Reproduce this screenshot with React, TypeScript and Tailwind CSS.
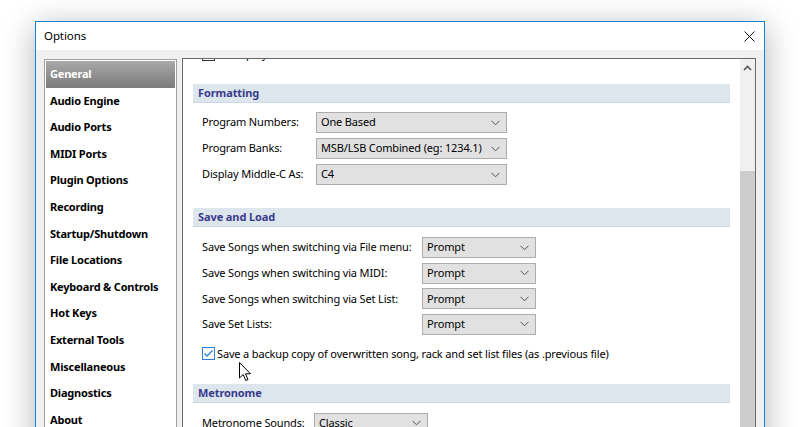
import React from "react";

const font = { fontFamily: '"Noto Sans", "Open Sans", sans-serif' };

function Chevron() {
  return (
    <svg width="9" height="6" viewBox="0 0 9 6" className="shrink-0">
      <path d="M0.5 0.8 L4.5 4.8 L8.5 0.8" fill="none" stroke="#505050" strokeWidth="1" />
    </svg>
  );
}

function Select({ value, w }: { value: string; w: string }) {
  return (
    <div
      className={`${w} h-[21px] bg-[#e1e1e1] border border-[#adadad] flex items-center justify-between pl-[4px] pr-[6px] text-[11px] tracking-[-0.15px] text-black shrink-0`}
    >
      <span className="whitespace-nowrap">{value}</span>
      <Chevron />
    </div>
  );
}

function Header({ title }: { title: string }) {
  return (
    <div className="h-[19px] bg-[#dde6ed] border-b border-[#cfd8df] flex items-center pl-[5px] text-[11px] tracking-[-0.1px] font-bold text-[#3a3a8c]">
      {title}
    </div>
  );
}

function Row({ label, lw, value, sw }: { label: string; lw: string; value: string; sw: string }) {
  return (
    <div className="flex items-center h-[21px] pl-[9px]">
      <div className={`${lw} text-[11px] tracking-[-0.15px] text-black whitespace-nowrap shrink-0`}>{label}</div>
      <Select value={value} w={sw} />
    </div>
  );
}

const items = [
  "General",
  "Audio Engine",
  "Audio Ports",
  "MIDI Ports",
  "Plugin Options",
  "Recording",
  "Startup/Shutdown",
  "File Locations",
  "Keyboard & Controls",
  "Hot Keys",
  "External Tools",
  "Miscellaneous",
  "Diagnostics",
  "About",
];

export default function App() {
  return (
    <div className="w-[800px] h-[427px] overflow-hidden bg-white relative" style={font}>
      <div className="ml-[35px] mt-[21px] w-[730px] h-[440px] border border-[#1883d7] bg-[#f0f0f0] shadow-[0_6px_30px_rgba(0,0,0,0.3)] flex flex-col">
        {/* title bar */}
        <div className="h-[28px] bg-white flex items-center justify-between pl-[8px] pr-[9px] shrink-0">
          <span className="text-[11.5px] tracking-[-0.1px] text-black">Options</span>
          <svg width="11" height="11" viewBox="0 0 11 11">
            <path d="M0.5 0.5 L10.5 10.5 M10.5 0.5 L0.5 10.5" stroke="#111" strokeWidth="1" />
          </svg>
        </div>
        {/* body */}
        <div className="flex items-start pl-[8px] pr-[8px] pt-[8px] gap-[5px] flex-1 min-h-0">
          {/* list */}
          <div className="w-[133px] h-[400px] mt-[1px] border border-[#a0a0a0] bg-white p-[1px] flex flex-col shrink-0">
            {items.map((it, i) => (
              <div
                key={it}
                className={`h-[26.6px] shrink-0 flex items-center pl-[4px] text-[11px] tracking-[-0.2px] font-bold whitespace-nowrap ${
                  i === 0 ? "bg-gradient-to-b from-[#a9a9a9] to-[#7b7b7b] text-white" : "text-black"
                }`}
              >
                {it}
              </div>
            ))}
          </div>
          {/* right panel */}
          <div className="w-[574px] h-[400px] border border-[#6a6a6a] bg-white flex shrink-0">
            <div className="flex-1 overflow-hidden flex flex-col pl-[10px] pr-[10px]">
              {/* clipped row */}
              <div className="mt-[-11px] h-[13px] flex items-center pl-[9px] gap-[3px] shrink-0">
                <div className="w-[13px] h-[13px] border border-[#333] bg-white" />
                <span className="text-[11px] text-black">Auto-play</span>
              </div>
              <div className="mt-[23px]">
                <Header title="Formatting" />
              </div>
              <div className="mt-[9px] flex flex-col gap-[5px]">
                <Row label="Program Numbers:" lw="w-[114px]" value="One Based" sw="w-[191px]" />
                <Row label="Program Banks:" lw="w-[114px]" value="MSB/LSB Combined (eg: 1234.1)" sw="w-[191px]" />
                <Row label="Display Middle-C As:" lw="w-[114px]" value="C4" sw="w-[191px]" />
              </div>
              <div className="mt-[23px]">
                <Header title="Save and Load" />
              </div>
              <div className="mt-[10px] flex flex-col gap-[4.67px]">
                <Row label="Save Songs when switching via File menu:" lw="w-[220px]" value="Prompt" sw="w-[114px]" />
                <Row label="Save Songs when switching via MIDI:" lw="w-[220px]" value="Prompt" sw="w-[114px]" />
                <Row label="Save Songs when switching via Set List:" lw="w-[220px]" value="Prompt" sw="w-[114px]" />
                <Row label="Save Set Lists:" lw="w-[220px]" value="Prompt" sw="w-[114px]" />
              </div>
              <div className="mt-[11px] h-[16px] flex items-center pl-[9px] gap-[2px]">
                <div className="w-[13px] h-[13px] border border-[#2a7fd4] bg-white flex items-center justify-center shrink-0">
                  <svg width="11" height="11" viewBox="0 0 11 11">
                    <path d="M1.5 5.5 L4 8 L9.5 2.5" fill="none" stroke="#2a7fd4" strokeWidth="1.3" />
                  </svg>
                </div>
                <span className="text-[11px] tracking-[-0.15px] text-black whitespace-nowrap">
                  Save a backup copy of overwritten song, rack and set list files (as .previous file)
                </span>
              </div>
              <div className="mt-[22px]">
                <Header title="Metronome" />
              </div>
              <div className="mt-[10px]">
                <Row label="Metronome Sounds:" lw="w-[112px]" value="Classic" sw="w-[114px]" />
              </div>
            </div>
            {/* scrollbar */}
            <div className="w-[15px] bg-[#f0f0f0] flex flex-col shrink-0">
              <div className="h-[17px] flex items-center justify-center shrink-0">
                <svg width="9" height="6" viewBox="0 0 9 6">
                  <path d="M1 5 L4.5 1.5 L8 5" fill="none" stroke="#555" strokeWidth="1.6" />
                </svg>
              </div>
              <div className="mt-[95px] flex-1 bg-[#cdcdcd]" />
            </div>
          </div>
        </div>
      </div>
      {/* mouse cursor */}
      <svg className="absolute left-[239px] top-[362px]" width="13" height="20" viewBox="0 0 13 20">
        <path d="M0.5 0.5 L0.5 16 L4.2 12.5 L6.8 18.5 L9 17.6 L6.5 11.8 L11.5 11.8 Z" fill="white" stroke="black" strokeWidth="1" strokeLinejoin="miter" />
      </svg>
    </div>
  );
}
